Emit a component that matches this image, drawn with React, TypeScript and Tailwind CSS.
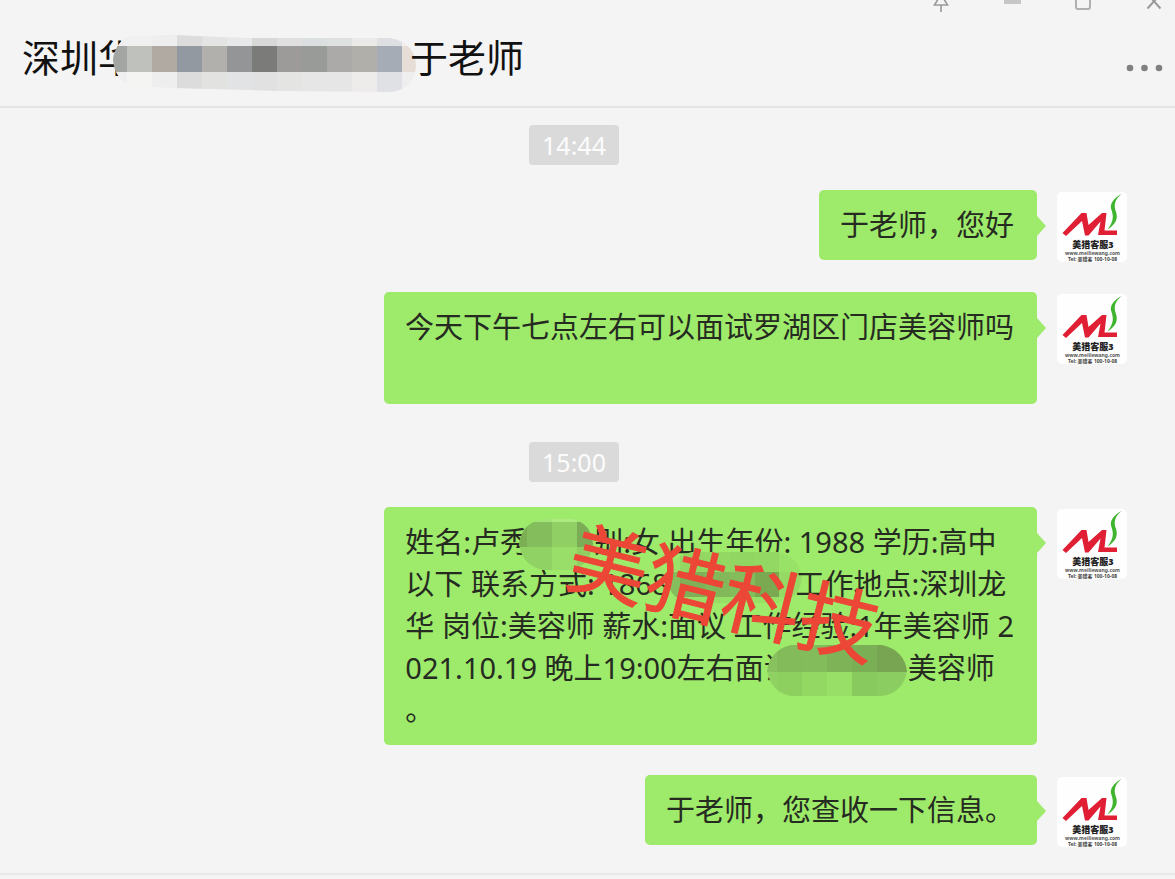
import type { ReactNode } from "react";

type MosaicProps = {
  width: number;
  height: number;
  outline: string;
  columns: number[];
  rows: number[];
  colors: string[][];
  className: string;
  id: string;
};

// Pixelated patch that hides private details
function Mosaic({ width, height, outline, columns, rows, colors, className, id }: MosaicProps) {
  return (
    <svg width={width} height={height} viewBox={`0 0 ${width} ${height}`} className={`absolute max-w-none ${className}`} aria-hidden="true">
      <clipPath id={id}>
        <path d={outline} />
      </clipPath>
      <g clipPath={`url(#${id})`} shapeRendering="crispEdges">
        {colors.map((line, r) =>
          line.map((fill, c) => (
            <rect key={`${r}-${c}`} x={columns[c]} y={rows[r]} width={columns[c + 1] - columns[c]} height={rows[r + 1] - rows[r]} fill={fill} />
          ))
        )}
      </g>
    </svg>
  );
}

function Avatar() {
  return (
    <svg viewBox="0 0 70 70" className="mt-[2px] size-[70px] shrink-0 rounded-[5px] bg-[#fefefe]" role="img" aria-label="美猎客服3">
      <path d="M5.5 41 L24.5 21 H29.5 L31.5 33 L45 21 H49.5 L47.5 38.5 H60 V43 H41 L43.5 29.5 L31.5 43.5 H28 L25 29 L9 44Z" fill="#e01f35" />
      <path d="M64.5 2 C57 6 52 12 54.5 18 C56.5 24 57 29 50.5 37.5 C58 33 61.5 27 59 20 C56.5 13 57.5 8 64.5 2Z" fill="#3fb52f" />
      <text x="36" y="56" textAnchor="middle" fontSize="9" fontWeight="900" fill="#222">美猎客服3</text>
      <text x="35.5" y="62.5" textAnchor="middle" fontSize="5" fontWeight="700" fill="#555">www.meiliewang.com</text>
      <text x="35.5" y="68.5" textAnchor="middle" fontSize="5" fontWeight="700" fill="#444">Tel: 美猎客 100-10-08</text>
    </svg>
  );
}

function Message({ children, overlay }: { children: ReactNode; overlay?: ReactNode }) {
  return (
    <li className="mb-[30px] flex items-start justify-end gap-5 pr-12">
      <div className="relative rounded-[5px] bg-[#9eea6a] py-[14px] pr-[23px] pl-[21px] text-[29px] leading-[42px] text-[#262b22]">
        {children}
        {overlay}
        <svg viewBox="0 0 9 20" className="absolute top-[26px] left-full h-5 w-[9px]" aria-hidden="true">
          <path d="M0 0 L9 10 L0 20Z" fill="#9eea6a" />
        </svg>
      </div>
      <Avatar />
    </li>
  );
}

function Line({ children }: { children?: ReactNode }) {
  return <p className="flex h-[42px] whitespace-pre">{children}</p>;
}

function TimeStamp({ children }: { children: string }) {
  return (
    <li className="flex justify-center pt-2 pr-[27px] pb-[25px]">
      <time className="rounded-[4px] bg-[#dadada] px-[13px] text-[25px] leading-10 text-[#fcfcfc]">{children}</time>
    </li>
  );
}

function WindowButton({ label, children }: { label: string; children: ReactNode }) {
  return (
    <button type="button" aria-label={label} className="h-[13px] w-6">
      <svg viewBox="0 0 24 13" className="h-[13px] w-6" fill="none" stroke="#999" strokeWidth="2">
        {children}
      </svg>
    </button>
  );
}

export default function App() {
  return (
    <div className="flex min-h-screen flex-col overflow-hidden bg-[#f4f4f4] font-['Noto_Sans','Noto_Sans_CJK_SC',sans-serif]">
      <header className="border-b-2 border-[#e5e5e5] pb-6">
        <div className="flex h-[13px] justify-end gap-[47px] pr-[9px]">
          <WindowButton label="置顶">
            <path d="M8.5 -4 V0 L5.5 5 H18.5 L15.5 0 V-4 M12 5 V12" strokeWidth="1.6" />
          </WindowButton>
          <WindowButton label="最小化">
            <path d="M4 1.5 H21" stroke="#c6c6c6" strokeWidth="5" />
          </WindowButton>
          <WindowButton label="最大化">
            <rect x="5" y="-6" width="14" height="15" rx="2" stroke="#b0b0b0" />
          </WindowButton>
          <WindowButton label="关闭">
            <path d="M5.5 -6 L18.5 8.5 M18.5 -6 L5.5 8.5" />
          </WindowButton>
        </div>
        <div className="flex items-end justify-between pt-[21px] pr-2 pl-[22px]">
          <h1 className="flex h-12 text-[38px] leading-[46px] text-[#111]">
            <span>深圳华</span>
            <span className="relative w-[274px]">
              <Mosaic
                id="title-mosaic"
                width={303}
                height={57}
                className="top-[1px] -left-[23px]"
                outline="M0 25 C1 14 8 2 20 1 L60 0 L135 3 H277 Q303 8 303 32 Q301 54 278 57 L165 56 L60 53 L20 51 C8 48 1 38 0 25Z"
                columns={[0, 14, 39, 64, 89, 114, 139, 164, 189, 214, 239, 264, 289, 303]}
                rows={[0, 11, 37, 57]}
                colors={[
                  ["#efefef", "#f0f0f0", "#eeeeee", "#dcdcdc", "#e4e4e4", "#e6e8ea", "#d8d8d8", "#e0e0e0", "#dcdfdf", "#dfe0e0", "#ebeae8", "#dddfe2", "#efeeed"],
                  ["#a3a5a3", "#bfc1bc", "#b0aaa2", "#9399a1", "#b1b0ad", "#949596", "#7b7b7a", "#9c9b9a", "#999b98", "#abaaa8", "#b1afa9", "#a5acb5", "#e6ddd6"],
                  ["#efefef", "#f4f4f2", "#eeeeef", "#dcdcdc", "#e2e2e0", "#e2e3e5", "#e1e1e1", "#e4e4e3", "#e6e6e6", "#e6e6e6", "#eeeceb", "#dfe1e4", "#efeeee"],
                ]}
              />
            </span>
            <span className="relative">于老师</span>
          </h1>
          <button type="button" aria-label="更多" className="mb-1 h-5 w-11">
            <svg viewBox="0 0 44 20" className="h-5 w-11" fill="#808080">
              <circle cx="7" cy="10" r="3.3" />
              <circle cx="21.5" cy="10" r="3.3" />
              <circle cx="36" cy="10" r="3.3" />
            </svg>
          </button>
        </div>
      </header>

      <main className="grow">
        <ol className="pt-[9px]">
          <TimeStamp>14:44</TimeStamp>
          <Message>
            <Line>于老师，您好</Line>
          </Message>
          <Message>
            <Line>今天下午七点左右可以面试罗湖区门店美容师吗</Line>
            <Line />
          </Message>
          <TimeStamp>15:00</TimeStamp>
          <Message
            overlay={
              <span className="absolute top-[46px] right-[155px] rotate-[14deg] text-[79px] leading-[80px] whitespace-nowrap text-[#ec4637] [-webkit-text-stroke:1px_#ec4637]">
                美猎科技
              </span>
            }
          >
            <Line>
              <span>姓名:卢秀</span>
              <span className="relative w-[65px]">
                <Mosaic
                  id="name-mosaic"
                  width={74}
                  height={52}
                  className="-top-[3px] -left-[10px]"
                  outline="M0 26 Q3 4 25 1 L52 1 Q72 4 74 26 Q71 48 52 52 H25 Q3 48 0 26Z"
                  columns={[0, 8, 33, 58, 74]}
                  rows={[0, 4, 29, 52]}
                  colors={[
                    ["#9bdf6c", "#a2e376", "#aceb82", "#9ade6d"],
                    ["#7caf54", "#84bd5c", "#8fcf63", "#7dac56"],
                    ["#8fd162", "#90d364", "#98de68", "#90cf63"],
                  ]}
                />
              </span>
              <span>别:女 出生年份: 1988 学历:高中</span>
            </Line>
            <Line>
              <span>以下 联系方式: 1868</span>
              <span className="relative w-[127px]">
                <Mosaic
                  id="phone-mosaic"
                  width={135}
                  height={52}
                  className="-top-3 -left-[2px]"
                  outline="M0 28 Q1 6 25 1 H111 Q132 5 135 27 Q133 48 111 52 H25 Q3 50 0 28Z"
                  columns={[0, 13, 38, 63, 88, 112, 135]}
                  rows={[0, 21, 46, 52]}
                  colors={[
                    ["#9ae368", "#93d762", "#92d863", "#91d662", "#93d863", "#99e268"],
                    ["#86bd5d", "#7fb058", "#82b85a", "#84bc5c", "#7ba952", "#95da65"],
                    ["#99e267", "#99e267", "#98df66", "#99e267", "#98e066", "#9be469"],
                  ]}
                />
              </span>
              <span className="relative">工作地点:深圳龙</span>
            </Line>
            <Line>华 岗位:美容师 薪水:面议 工作经验:1年美容师 2</Line>
            <Line>
              <span>021.10.19 晚上19:00左右面试</span>
              <span className="relative w-[115px]">
                <Mosaic
                  id="place-mosaic"
                  width={140}
                  height={51}
                  className="-top-[2px] -left-[26px]"
                  outline="M0 26 Q3 5 24 0 H115 Q137 5 140 26 Q136 48 115 51 H24 Q4 47 0 26Z"
                  columns={[0, 10, 35, 60, 85, 110, 140]}
                  rows={[0, 27, 51]}
                  colors={[
                    ["#87c25e", "#83bb5a", "#83bd5b", "#7eb457", "#7baf56", "#77a552"],
                    ["#8fd263", "#8dd060", "#92d863", "#98df67", "#89ca5e", "#8bcd60"],
                  ]}
                />
              </span>
              <span>美容师</span>
            </Line>
            <Line>。</Line>
          </Message>
          <Message>
            <Line>于老师，您查收一下信息。</Line>
          </Message>
        </ol>
      </main>
      <footer className="-mt-1 h-[6px] border-t-2 border-[#e9e9e9]" />
    </div>
  );
}
